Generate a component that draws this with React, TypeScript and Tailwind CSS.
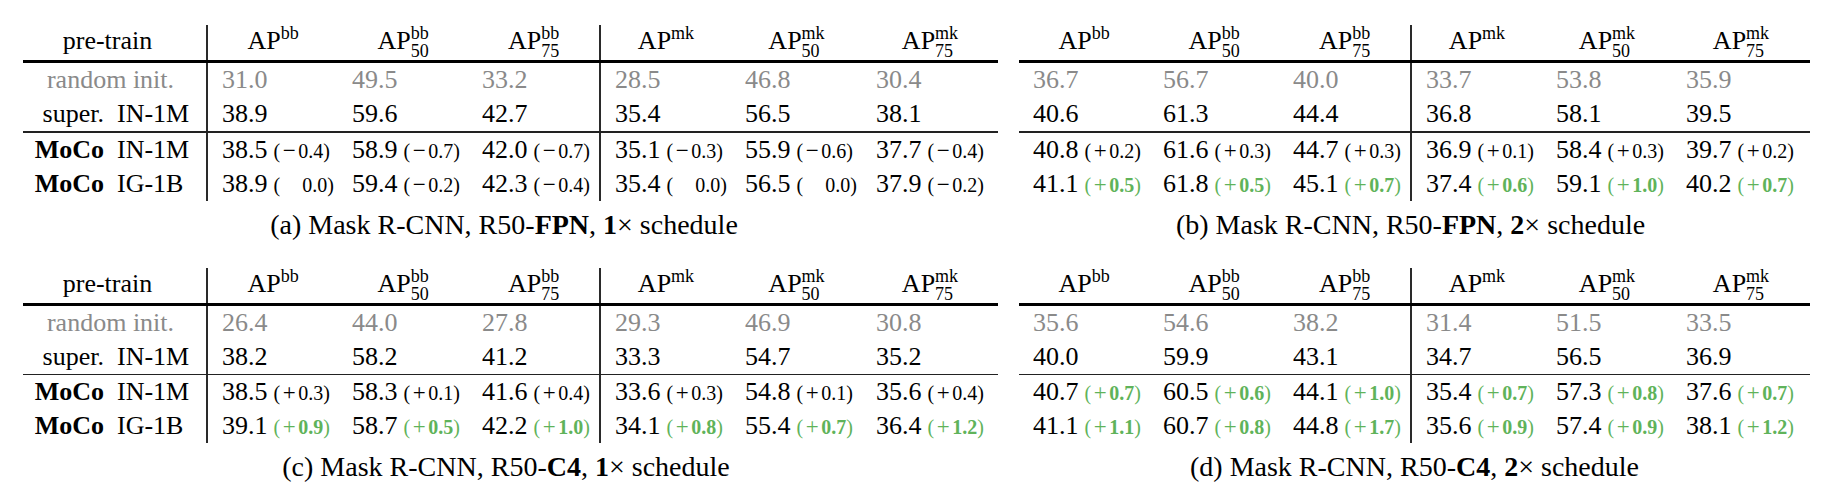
import React from "react";

type Cell = [string, string?];
type Row = { kind: "random" | "super" | "moco"; label?: string; cells: Cell[] };

const mkRows = (
  random: string[],
  sup: string[],
  inNet: Cell[],
  ig: Cell[]
): Row[] => [
  { kind: "random", cells: random.map((v) => [v]) },
  { kind: "super", label: "IN-1M", cells: sup.map((v) => [v]) },
  { kind: "moco", label: "IN-1M", cells: inNet },
  { kind: "moco", label: "IG-1B", cells: ig },
];

const tables: Record<string, Row[]> = {
  a: mkRows(
    ["31.0", "49.5", "33.2", "28.5", "46.8", "30.4"],
    ["38.9", "59.6", "42.7", "35.4", "56.5", "38.1"],
    [["38.5", "-0.4"], ["58.9", "-0.7"], ["42.0", "-0.7"], ["35.1", "-0.3"], ["55.9", "-0.6"], ["37.7", "-0.4"]],
    [["38.9", "0.0"], ["59.4", "-0.2"], ["42.3", "-0.4"], ["35.4", "0.0"], ["56.5", "0.0"], ["37.9", "-0.2"]]
  ),
  b: mkRows(
    ["36.7", "56.7", "40.0", "33.7", "53.8", "35.9"],
    ["40.6", "61.3", "44.4", "36.8", "58.1", "39.5"],
    [["40.8", "+0.2"], ["61.6", "+0.3"], ["44.7", "+0.3"], ["36.9", "+0.1"], ["58.4", "+0.3"], ["39.7", "+0.2"]],
    [["41.1", "+0.5"], ["61.8", "+0.5"], ["45.1", "+0.7"], ["37.4", "+0.6"], ["59.1", "+1.0"], ["40.2", "+0.7"]]
  ),
  c: mkRows(
    ["26.4", "44.0", "27.8", "29.3", "46.9", "30.8"],
    ["38.2", "58.2", "41.2", "33.3", "54.7", "35.2"],
    [["38.5", "+0.3"], ["58.3", "+0.1"], ["41.6", "+0.4"], ["33.6", "+0.3"], ["54.8", "+0.1"], ["35.6", "+0.4"]],
    [["39.1", "+0.9"], ["58.7", "+0.5"], ["42.2", "+1.0"], ["34.1", "+0.8"], ["55.4", "+0.7"], ["36.4", "+1.2"]]
  ),
  d: mkRows(
    ["35.6", "54.6", "38.2", "31.4", "51.5", "33.5"],
    ["40.0", "59.9", "43.1", "34.7", "56.5", "36.9"],
    [["40.7", "+0.7"], ["60.5", "+0.6"], ["44.1", "+1.0"], ["35.4", "+0.7"], ["57.3", "+0.8"], ["37.6", "+0.7"]],
    [["41.1", "+1.1"], ["60.7", "+0.8"], ["44.8", "+1.7"], ["35.6", "+0.9"], ["57.4", "+0.9"], ["38.1", "+1.2"]]
  ),
};

const headers: [string, string?][] = [
  ["bb"], ["bb", "50"], ["bb", "75"],
  ["mk"], ["mk", "50"], ["mk", "75"],
];

const Ap = ({ sup, sub }: { sup: string; sub?: string }) => (
  <span>
    AP
    <span className="relative top-[8px] inline-block text-left text-[18px] leading-[18px]">
      <span className="block">{sup}</span>
      <span className="block">{sub ?? "\u00a0"}</span>
    </span>
  </span>
);

// improvement over the supervised baseline; gains of 0.5 or more are green
const Delta = ({ d }: { d: string }) => {
  const v = parseFloat(d);
  const green = v >= 0.5;
  const sign = v > 0 ? "+" : v < 0 ? "\u2212" : "";
  return (
    <span
      className={`ml-[6px] text-[20px] leading-[18px] ${green ? "text-[#5fb35a]" : ""}`}
    >
      (
      <span
        className={
          sign
            ? "inline-block w-[18px] text-center text-[23px] leading-[18px]"
            : "inline-block w-[22px]"
        }
      >
        {sign}
      </span>
      <span className={green ? "font-bold" : ""}>{Math.abs(v).toFixed(1)}</span>)
    </span>
  );
};

// column widths: first group ends with a vertical rule
const colsWithLabel = "grid grid-cols-[185px_130px_130px_133px_130px_131px_136px]";
const colsNoLabel = "grid grid-cols-[130px_130px_133px_130px_130px_138px]";

const vline = "border-r-2 border-[#2a2a2a]";

const Table = ({ rows, withLabel }: { rows: Row[]; withLabel: boolean }) => {
  const cols = withLabel ? colsWithLabel : colsNoLabel;
  const dataRow = (r: Row, i: number) => (
    <div key={i} className={`${cols} h-[34px] grid-rows-[34px] leading-[34px]`}>
      {withLabel &&
        (r.kind === "random" ? (
          <div className={`${vline} pr-[8px] text-center text-[#8a8a8a]`}>random init.</div>
        ) : (
          <div className={`${vline} flex`}>
            <span className={`w-[81px] text-right ${r.kind === "moco" ? "font-bold" : ""}`}>
              {r.kind === "moco" ? "MoCo" : "super."}
            </span>
            <span className="ml-[13px]">{r.label}</span>
          </div>
        ))}
      {r.cells.map(([v, d], j) => (
        <div
          key={j}
          className={`whitespace-nowrap pl-[14px] ${j === 2 ? vline : ""} ${
            r.kind === "random" ? "text-[#8a8a8a]" : ""
          }`}
        >
          {v}
          {d && <Delta d={d} />}
        </div>
      ))}
    </div>
  );

  return (
    <div className="flex flex-col text-[26px]">
      <div className={`${cols} h-[35px] grid-rows-[35px] leading-[26px]`}>
        {withLabel && (
          <div className={`${vline} flex items-end justify-center pb-[6px] pr-[14px]`}>
            pre-train
          </div>
        )}
        {headers.map(([sup, sub], j) => (
          <div
            key={j}
            className={`flex items-end justify-center pb-[6px] ${j === 2 ? vline : ""}`}
          >
            <Ap sup={sup} sub={sub} />
          </div>
        ))}
      </div>
      <div className="h-[3px] bg-black" />
      {dataRow(rows[0], 0)}
      {dataRow(rows[1], 1)}
      <div className="h-[1.5px] bg-[#222]" />
      {dataRow(rows[2], 2)}
      {dataRow(rows[3], 3)}
    </div>
  );
};

const Caption = ({
  tag,
  arch,
  sched,
  className,
}: {
  tag: string;
  arch: string;
  sched: string;
  className: string;
}) => (
  <p className={`mt-[10px] text-center text-[28px] leading-[28px] ${className}`}>
    ({tag}) Mask R-CNN, R50-<b>{arch}</b>, <b>{sched}</b>× schedule
  </p>
);

export default function App() {
  return (
    <div className="h-[492px] w-[1828px] bg-white pl-[23px] pt-[25px] [font-family:'Liberation_Serif','Times_New_Roman',serif] text-black">
      <div className="flex gap-[21px]">
        <div className="flex w-[975px] flex-col">
          <Table rows={tables.a} withLabel />
          <Caption tag="a" arch="FPN" sched="1" className="pr-[13px]" />
        </div>
        <div className="flex w-[791px] flex-col">
          <Table rows={tables.b} withLabel={false} />
          <Caption tag="b" arch="FPN" sched="2" className="pr-[8px]" />
        </div>
      </div>
      <div className="mt-[29px] flex gap-[21px]">
        <div className="flex w-[975px] flex-col">
          <Table rows={tables.c} withLabel />
          <Caption tag="c" arch="C4" sched="1" className="pr-[9px]" />
        </div>
        <div className="flex w-[791px] flex-col">
          <Table rows={tables.d} withLabel={false} />
          <Caption tag="d" arch="C4" sched="2" className="" />
        </div>
      </div>
    </div>
  );
}
